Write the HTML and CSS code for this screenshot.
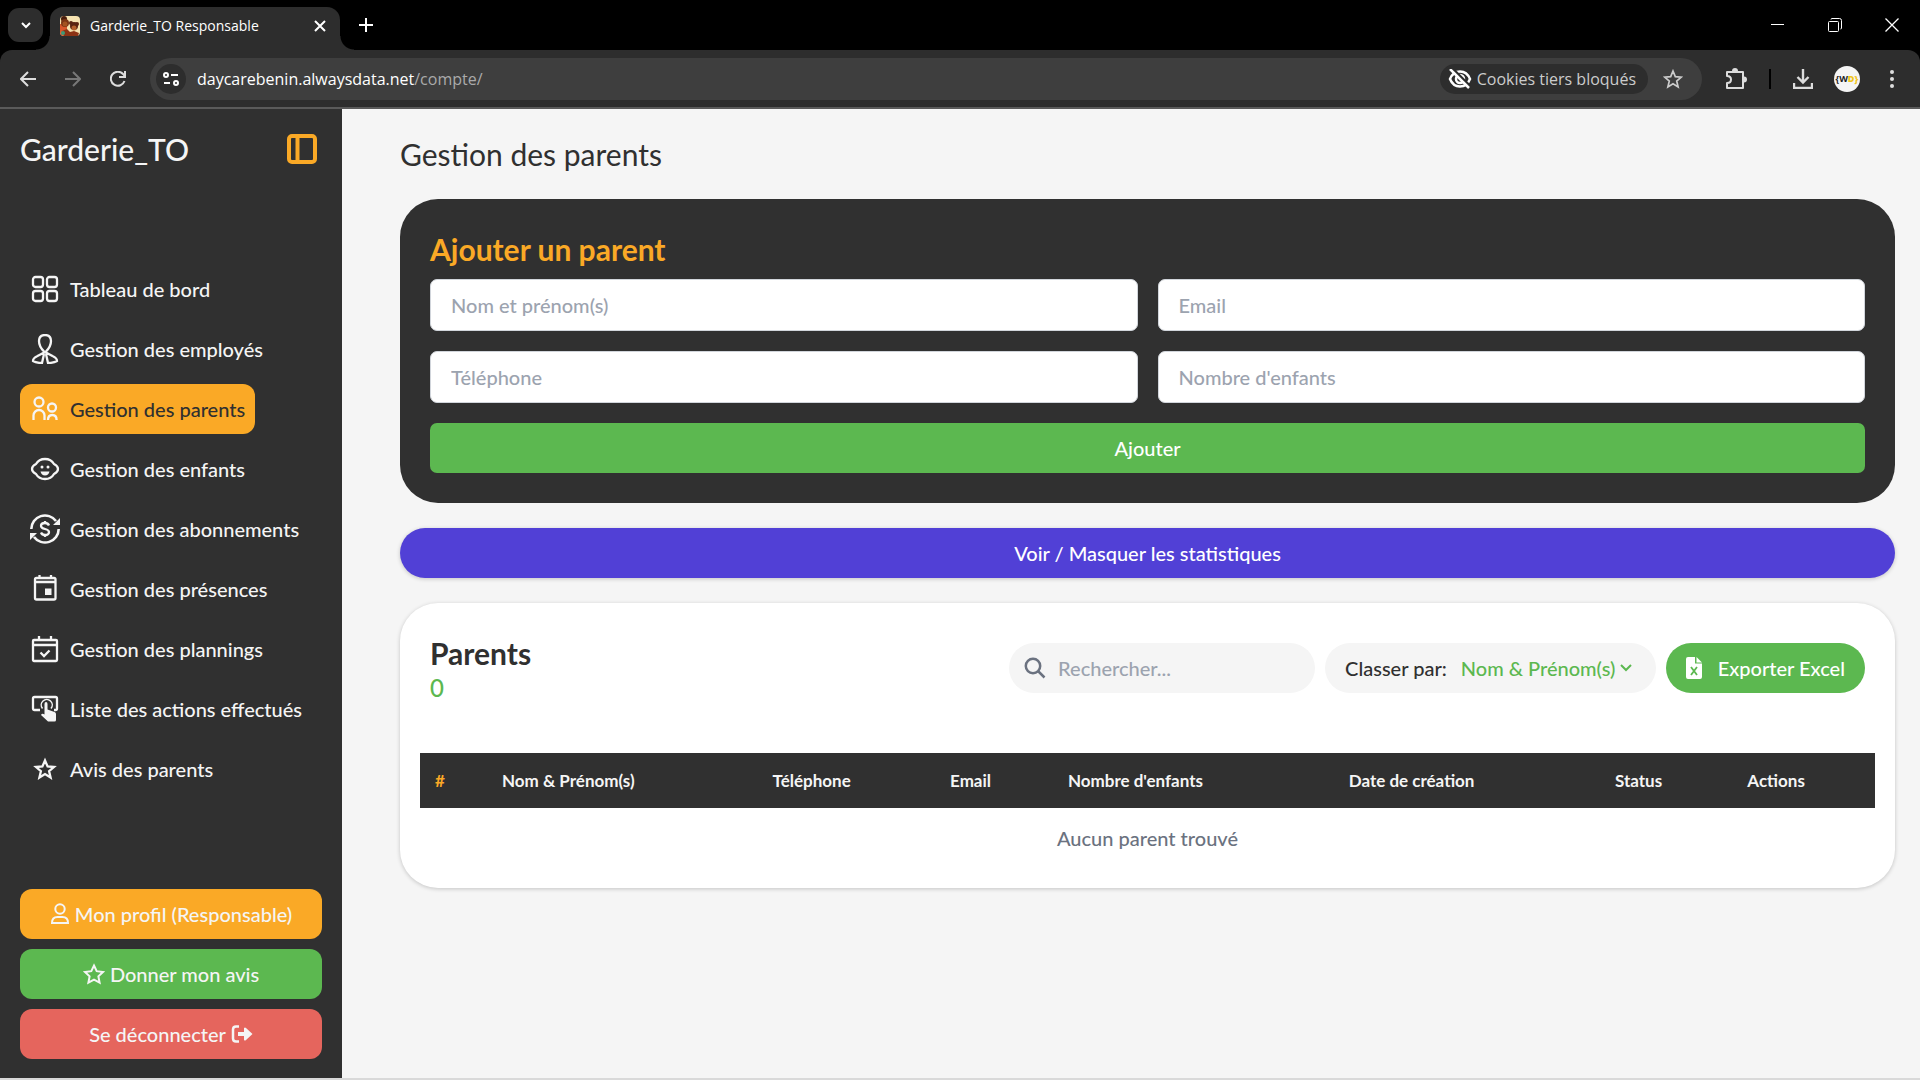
FILE: index.html
```html
<!DOCTYPE html>
<html lang="fr">
<head>
    <meta charset="UTF-8">
    <title>Garderie_TO Responsable</title>
    <link rel="stylesheet" href="styles.css">
</head>
<body>
    <div class="tabs">
        <button class="tab-list" aria-label="Onglets"><svg width="12" height="12" viewBox="0 0 12 12"><path d="M2 4l4 4 4-4" stroke-width="2"/></svg></button>
        <div class="tab">
            <svg class="favicon" width="20" height="20" viewBox="0 0 20 20">
                <rect width="20" height="20" rx="4" fill="#f6e3b0"/>
                <path d="M0 8h7v12H4a4 4 0 0 1-4-4z" fill="#d8572a"/>
                <circle cx="4" cy="3" r="3" fill="#4a1d0c"/><circle cx="5" cy="7" r="4" fill="#7a3413"/><circle cx="5" cy="8" r="2.500" fill="#a3531f"/>
                <circle cx="11" cy="7" r="2" fill="#5b2410"/><circle cx="17" cy="8" r="2" fill="#5b2410"/>
                <circle cx="14" cy="10" r="4" fill="#5b2410"/><circle cx="14" cy="12" r="2.500" fill="#b5602a"/>
                <path d="M2 15l5-2 3 3 4-1 5 2-1 3H4z" fill="#8c3214"/><circle cx="3" cy="17" r="2" fill="#3f9a78"/>
            </svg>
            <span class="tab-title">Garderie_TO Responsable</span>
            <button class="tab-close" aria-label="Fermer"><svg width="12" height="12" viewBox="0 0 12 12"><path d="M1 1l10 10M11 1L1 11" stroke-width="2"/></svg></button>
        </div>
        <button class="new-tab" aria-label="Nouvel onglet"><svg width="14" height="14" viewBox="0 0 14 14"><path d="M7 0v14M0 7h14" stroke-width="2"/></svg></button>
        <div class="window-buttons">
            <button aria-label="Réduire"><svg width="14" height="14" viewBox="0 0 14 14"><path d="M0 6.500h13"/></svg></button>
            <button aria-label="Restaurer"><svg width="14" height="14" viewBox="0 0 14 14"><rect x=".5" y="3.500" width="10" height="10" rx="1"/><path d="M3 1.500q0-1 1-1h7.500a2 2 0 0 1 2 2V10q0 1-1 1"/></svg></button>
            <button aria-label="Fermer la fenêtre"><svg width="14" height="14" viewBox="0 0 14 14"><path d="M.5.5l13 13M13.500.5l-13 13" stroke-width="1.300"/></svg></button>
        </div>
    </div>

    <div class="toolbar">
        <button class="tool" aria-label="Retour"><svg width="16" height="16" viewBox="0 0 16 16"><path d="M16 8H1.500M8 1L1 8l7 7" stroke-width="2"/></svg></button>
        <button class="tool off" aria-label="Avancer"><svg width="16" height="16" viewBox="0 0 16 16"><path d="M0 8h14.500M8 1l7 7-7 7" stroke-width="2"/></svg></button>
        <button class="tool" aria-label="Actualiser"><svg width="16" height="16" viewBox="0 0 16 16"><path d="M14.500 10A7 7 0 1 1 13 3l2 2.500M15 0v6H9" stroke-width="2"/></svg></button>
        <div class="address">
            <button class="site-info" aria-label="Infos du site"><svg width="16" height="14" viewBox="0 0 16 14"><circle cx="3" cy="3" r="2"/><path d="M8 3h7M1 11h6"/><circle cx="13" cy="11" r="2"/></svg></button>
            <span class="url">daycarebenin.alwaysdata.net<span class="path">/compte/</span></span>
            <button class="cookies">
                <svg width="24" height="20" viewBox="0 0 24 20"><path d="M2 10c2-5 6-7.500 10-7.500S20 5 22 10c-2 5-6 7.500-10 7.500S4 15 2 10z"/><circle cx="12" cy="10" r="4"/><path d="M4 -1l18 18" stroke="#2d2d2d"/><path d="M2 0l19 19"/></svg>
                Cookies tiers bloqués
            </button>
            <button class="bookmark" aria-label="Favori"><svg width="20" height="20" viewBox="0 0 20 20"><path d="M10 2l2.300 5.600 6 .5-4.600 3.900 1.400 5.900-5.100-3.200-5.100 3.200L6.300 12 1.700 8.100l6-.5z" stroke-width="1.700"/></svg></button>
        </div>
        <button class="tool" aria-label="Extensions"><svg width="22" height="22" viewBox="0 0 22 22"><path d="M2 4h16v16H2v-5q4 0 4-3.500T2 8z" stroke-width="2" stroke-linejoin="round"/><path d="M7 3a3 3 0 0 1 6 0zM19 8.500a3 3 0 0 1 0 6z" fill="#ddd" stroke="none"/></svg></button>
        <span class="separator"></span>
        <button class="tool" aria-label="Téléchargements"><svg width="20" height="20" viewBox="0 0 20 20"><path d="M10 0v13M4.500 8l5.500 5.500L15.500 8M1 14v5h18v-5" stroke-width="2.400"/></svg></button>
        <span class="avatar">{W<b>D}</b></span>
        <button class="tool menu" aria-label="Menu"><svg width="6" height="18" viewBox="0 0 6 18"><g fill="#ddd" stroke="none"><circle cx="3" cy="2" r="2"/><circle cx="3" cy="9" r="2"/><circle cx="3" cy="16" r="2"/></g></svg></button>
    </div>

    <div class="page">
        <aside class="sidebar">
            <div class="brand">
                <span class="brand-name">Garderie_TO</span>
                <button class="toggle" aria-label="Réduire le menu"><svg width="32" height="32" viewBox="0 0 32 32"><rect x="3" y="3" width="26" height="26" rx="3" stroke-width="4"/><path d="M11.500 3v26" stroke-width="4"/></svg></button>
            </div>

            <nav class="nav">
                <a href="#">
                    <svg viewBox="0 0 30 30"><rect x="3" y="3" width="10" height="10" rx="2.500"/><rect x="17" y="3" width="10" height="10" rx="2.500"/><rect x="3" y="17" width="10" height="10" rx="2.500"/><rect x="17" y="17" width="10" height="10" rx="2.500"/></svg>
                    Tableau de bord
                </a>
                <a href="#">
                    <svg viewBox="0 0 30 30"><path d="M22.500 22L14 17.500C10.500 14 9 10 9 7q0-6 6-6t6 6c0 3-1.500 7-5 10.500L7.500 22Q3 24 3 27q3 2 9 2l2-9M16 20l2 9q6 0 9-2 0-3-4.500-5"/></svg>
                    Gestion des employés
                </a>
                <a href="#" class="active">
                    <svg viewBox="0 0 30 30"><circle cx="9" cy="8" r="4.500"/><path d="M3.500 26v-4.500a5.500 5.500 0 0 1 11 0V26M18 26q0-5 4.300-5t4.300 5"/><circle cx="22" cy="13.500" r="4"/></svg>
                    Gestion des parents
                </a>
                <a href="#">
                    <svg viewBox="0 0 30 30"><path d="M6 10C8 6.500 11 5 15 5s7 1.500 9 5q4 2 4 5t-4 5c-2 3.500-5 5-9 5s-7-1.500-9-5q-4-2-4-5t4-5z"/><path d="M10.500 17.500h9q-1 4-4.500 4t-4.500-4z" fill="#f5f5f5" stroke="none"/><g fill="#f5f5f5" stroke="none"><circle cx="12" cy="13" r="1.500"/><circle cx="18" cy="13" r="1.500"/></g></svg>
                    Gestion des enfants
                </a>
                <a href="#">
                    <svg viewBox="0 0 30 30"><path d="M1.300 15A13.700 13.700 0 0 1 26 7M28.700 15A13.700 13.700 0 0 1 4 23" stroke-width="2.600"/><path d="M30 4v7h-7zM0 26v-7h7z" fill="#f5f5f5" stroke="none"/><path d="M19 11.500q-1-2.500-4-2.500-4 0-4 3 0 2 4 3t4 3q0 3-4 3-3 0-4-2.500M15 7v2M15 21v2" stroke-width="2.300"/></svg>
                    Gestion des abonnements
                </a>
                <a href="#">
                    <svg viewBox="0 0 30 30"><rect x="5" y="4" width="20.500" height="21.500" rx="1.500"/><path d="M5 8h20.500M9.500 1v3M21 1v3"/><path d="M15 14.500h6.500V21H15z" fill="#f5f5f5" stroke="none"/></svg>
                    Gestion des présences
                </a>
                <a href="#">
                    <svg viewBox="0 0 30 30"><rect x="3" y="6" width="24" height="21" rx="1"/><path d="M3 11h24M9 2v4M21 2v4M10.500 18.500l3.500 3.500 5.500-5.500"/></svg>
                    Gestion des plannings
                </a>
                <a href="#">
                    <svg viewBox="0 0 30 30"><path d="M10 16H4.500Q3 16 3 14.500v-10Q3 3 4.500 3h21Q27 3 27 4.500v10q0 1.500-1.500 1.500H24"/><path d="M12.500 14.500a5.500 5.500 0 1 1 8.500 0" stroke-width="1.500"/><path d="M14.500 10q0-2 1.500-2t1.500 2v5.500l7 2.500q1.500.5 1.500 2v6q0 1.500-1.500 1.500H18L11 21q1-2 3.500-.5z" fill="#f5f5f5" stroke="none"/></svg>
                    Liste des actions effectués
                </a>
                <a href="#">
                    <svg viewBox="0 0 30 30"><path d="M15 6.500l2.600 6 6.400.5-4.900 4.200 1.500 6.300-5.600-3.400-5.600 3.400 1.500-6.300L6 13l6.400-.5z"/></svg>
                    Avis des parents
                </a>
            </nav>

            <div class="account">
                <a href="#" class="profile"><svg width="20" height="22" viewBox="0 0 20 22"><circle cx="10" cy="6" r="4.700"/><path d="M2 20q0-6 5.500-6h5q5.500 0 5.500 6z"/></svg>Mon profil (Responsable)</a>
                <a href="#" class="review"><svg width="22" height="22" viewBox="0 0 22 22"><path d="M11 2.500l2.700 5.700 6.300.8-4.600 4.400 1.200 6.300-5.600-3.100-5.600 3.100 1.200-6.300L2 9l6.300-.8z"/></svg>Donner mon avis</a>
                <a href="#" class="logout">Se déconnecter<svg width="22" height="20" viewBox="0 0 22 20"><path d="M8 2.500H5Q2 2.500 2 5.500v9q0 3 3 3h3" stroke-width="2.500"/><path d="M7 8h6V4q1-1 2 0l6.500 6-6.500 6q-1 1-2 0v-4H7z" fill="#f5f5f5" stroke="none"/></svg></a>
            </div>
        </aside>

        <main class="content">
            <h1>Gestion des parents</h1>

            <form class="add-card">
                <h2>Ajouter un parent</h2>
                <div class="fields">
                    <input type="text" placeholder="Nom et prénom(s)" aria-label="Nom et prénom(s)">
                    <input type="email" placeholder="Email" aria-label="Email">
                    <input type="tel" placeholder="Téléphone" aria-label="Téléphone">
                    <input type="text" placeholder="Nombre d'enfants" aria-label="Nombre d'enfants">
                </div>
                <button type="button" class="add">Ajouter</button>
            </form>

            <button class="stats">Voir / Masquer les statistiques</button>

            <section class="list-card">
                <div class="list-head">
                    <div>
                        <h2>Parents</h2>
                        <p class="count">0</p>
                    </div>
                    <div class="actions">
                        <label class="search">
                            <svg width="22" height="22" viewBox="0 0 22 22"><circle cx="9" cy="9" r="7.200"/><path d="M14 14l6.500 6.500"/></svg>
                            <input type="search" placeholder="Rechercher..." aria-label="Rechercher">
                        </label>
                        <div class="sort">
                            <label for="tri">Classer par:</label>
                            <select id="tri">
                                <option>Nom &amp; Prénom(s)</option>
                            </select>
                            <svg width="12" height="8" viewBox="0 0 12 8"><path d="M1 1l5 5 5-5"/></svg>
                        </div>
                        <button class="export">
                            <svg width="16" height="22" viewBox="0 0 16 22"><path d="M2 0h7v6.500h7V20q0 2-2 2H2q-2 0-2-2V2q0-2 2-2z" fill="#fff"/><path d="M10.500 0L16 5.500h-5.500z" fill="#fff"/><path d="M5 10l6 8M11 10l-6 8" stroke="#5cb850" stroke-width="1.800"/></svg>
                            Exporter Excel
                        </button>
                    </div>
                </div>

                <table>
                    <thead>
                        <tr>
                            <th class="col-id">#</th>
                            <th class="col-name">Nom &amp; Prénom(s)</th>
                            <th class="col-phone">Téléphone</th>
                            <th class="col-email">Email</th>
                            <th class="col-kids">Nombre d'enfants</th>
                            <th class="col-date">Date de création</th>
                            <th class="col-status">Status</th>
                            <th class="col-actions">Actions</th>
                        </tr>
                    </thead>
                    <tbody>
                        <tr>
                            <td colspan="8">Aucun parent trouvé</td>
                        </tr>
                    </tbody>
                </table>
            </section>
        </main>
    </div>
</body>
</html>
```
FILE: styles.css
```css
* { box-sizing: border-box; }
body { margin: 0; min-height: 100vh; display: flex; flex-direction: column; background: #000; color: #303030; font-family: Lato, "Liberation Sans", sans-serif; font-size: 20px; font-weight: 500; line-height: 30px; }
h1, h2, p { margin: 0; }
a { color: inherit; text-decoration: none; }
button, input, select { font: inherit; color: inherit; border: none; background: none; padding: 0; margin: 0; }
button { cursor: pointer; }
svg { fill: none; stroke: currentColor; stroke-width: 2; flex-shrink: 0; display: block; }

/* navigateur */
.tabs { display: flex; align-items: flex-end; height: 50px; padding-left: 8px; color: #fff; font-family: "Open Sans", "Noto Sans", sans-serif; font-size: 14px; font-weight: 400; }
.tabs button { display: flex; align-items: center; justify-content: center; }
.tab-list { width: 35px; height: 34px; margin-bottom: 8px; background: #2d2d2d; border-radius: 11px; }
.tab { position: relative; display: flex; align-items: center; gap: 10px; width: 290px; height: 43px; margin-left: 7px; padding: 0 10px 6px; background: #2d2d2d; border-radius: 13px 13px 0 0; }
.tab::before, .tab::after { content: ""; position: absolute; bottom: 0; width: 14px; height: 14px; }
.tab::before { left: -14px; background: radial-gradient(circle at 0 0, transparent 13px, #2d2d2d 14px); }
.tab::after { right: -14px; background: radial-gradient(circle at 100% 0, transparent 13px, #2d2d2d 14px); }
.favicon { stroke: none; }
.tab-title { flex: 1; }
.tab-close { width: 20px; height: 20px; }
.new-tab { width: 30px; height: 30px; margin: 0 0 10px 11px; }
.window-buttons { display: flex; margin-left: auto; height: 50px; }
.window-buttons button { width: 57px; }
.window-buttons svg { stroke-width: 1; }

.toolbar { display: flex; align-items: center; height: 59px; padding: 0 12px; background: #2d2d2d; border-bottom: 2px solid #5a5a5a; border-radius: 12px 12px 0 0; color: #ddd; font-family: "Open Sans", "Noto Sans", sans-serif; font-size: 16px; font-weight: 400; }
.tool { display: flex; align-items: center; justify-content: center; width: 32px; height: 32px; margin-right: 13px; }
.tool.off { color: #777; }
.tool.menu { margin-right: 0; }
.address { flex: 1; display: flex; align-items: center; height: 42px; margin: 0 18px 0 3px; padding: 0 6px; background: #3e3e3e; border-radius: 21px; }
.site-info { display: flex; align-items: center; justify-content: center; width: 30px; height: 30px; border-radius: 50%; background: #2d2d2d; color: #fff; }
.url { flex: 1; margin-left: 11px; color: #fff; }
.path { color: #aaa; }
.cookies { display: flex; align-items: center; gap: 5px; height: 30px; padding: 0 12px 0 8px; border-radius: 15px; background: #2d2d2d; color: #ccc; }
.cookies svg { color: #fff; stroke-width: 2.5; }
.bookmark { margin: 0 13px 0 15px; color: #ccc; }
.separator { width: 2px; height: 20px; margin: 0 16px 0 4px; background: #000; }
.avatar { width: 26px; height: 26px; margin: 0 16px 0 2px; border-radius: 50%; background: #f5f5f5; color: #222; font-size: 9px; font-weight: 700; line-height: 26px; text-align: center; }
.avatar b { color: #f0c419; }

/* page */
.page { flex: 1; display: flex; background: #f5f5f5; border-bottom: 2px solid #d9d9d9; }
.sidebar { width: 342px; display: flex; flex-direction: column; padding: 20px 20px 19px; background: #303030; color: #f5f5f5; }
.brand { display: flex; align-items: center; justify-content: space-between; height: 40px; margin-bottom: 95px; padding-right: 4px; }
.brand-name { font-size: 30px; }
.toggle { color: #faa926; }

.nav { display: flex; flex-direction: column; align-items: flex-start; gap: 10px; }
.nav a { display: flex; align-items: center; gap: 10px; height: 50px; padding: 0 10px; border-radius: 12px; white-space: nowrap; }
.nav svg { width: 30px; height: 30px; stroke-width: 2.3; }
.nav .active { background: #faa926; color: #303030; }
.nav .active svg { color: #f5f5f5; }

.account { display: flex; flex-direction: column; gap: 10px; margin-top: auto; }
.account a { display: flex; align-items: center; justify-content: center; gap: 5px; height: 50px; border-radius: 12px; }
.profile { background: #faa926; }
.review { background: #5cb850; }
.logout { background: #e5655d; }

.content { flex: 1; padding: 25px 25px 25px 58px; }
h1 { font-size: 30px; font-weight: 400; line-height: 40px; margin-bottom: 25px; }
h2 { font-size: 30px; font-weight: 700; line-height: 40px; }

.add-card { padding: 30px; background: #303030; border-radius: 38px; }
.add-card h2 { color: #faa926; margin-bottom: 10px; }
.fields { display: grid; grid-template-columns: 1fr 1fr; gap: 20px; margin-bottom: 20px; }
.fields input { width: 100%; height: 52px; padding: 0 20px; background: #fff; border: 1px solid #d1d5db; border-radius: 7px; }
input::placeholder { color: #9ca3af; }
.add { display: block; width: 100%; height: 50px; background: #5cb850; border-radius: 7px; color: #fff; }

.stats { display: block; width: 100%; height: 50px; margin: 25px 0; background: #5140d6; border-radius: 25px; color: #fff; box-shadow: 0 1px 4px rgba(0, 0, 0, 0.2); }

.list-card { padding: 30px 20px 20px; background: #fff; border-radius: 38px; box-shadow: 0 1px 4px rgba(0, 0, 0, 0.2); }
.list-head { display: flex; justify-content: space-between; padding: 0 10px; margin-bottom: 50px; }
.count { font-size: 24px; color: #5cb850; }
.actions { display: flex; gap: 10px; padding-top: 10px; }
.search, .sort, .export { display: flex; align-items: center; height: 50px; border-radius: 25px; background: #f5f5f5; }
.search { width: 306px; gap: 12px; padding: 0 15px; color: #6b7280; }
.search svg { stroke-width: 2.5; }
.search input { width: 100%; outline: none; }
.sort { padding: 0 24px 0 20px; gap: 4px; }
.sort label { margin-right: 10px; }
.sort select { appearance: none; color: #5cb850; }
.sort svg { color: #5cb850; }
.export { gap: 16px; padding: 0 20px; background: #5cb850; color: #fff; white-space: nowrap; }
.export svg { stroke: none; }

table { width: 100%; border-collapse: collapse; table-layout: fixed; }
th { height: 55px; padding: 0 15px; background: #303030; color: #f5f5f5; font-size: 17px; font-weight: 700; text-align: left; }
td { height: 60px; padding: 0; text-align: center; color: #6b7280; }
.col-id { width: 4.6%; color: #faa926; }
.col-name { width: 18.6%; }
.col-phone { width: 12.2%; }
.col-email { width: 8.1%; }
.col-kids { width: 19.3%; }
.col-date { width: 18.3%; }
.col-status { width: 9.1%; }
.col-actions { width: 9.8%; }
```
